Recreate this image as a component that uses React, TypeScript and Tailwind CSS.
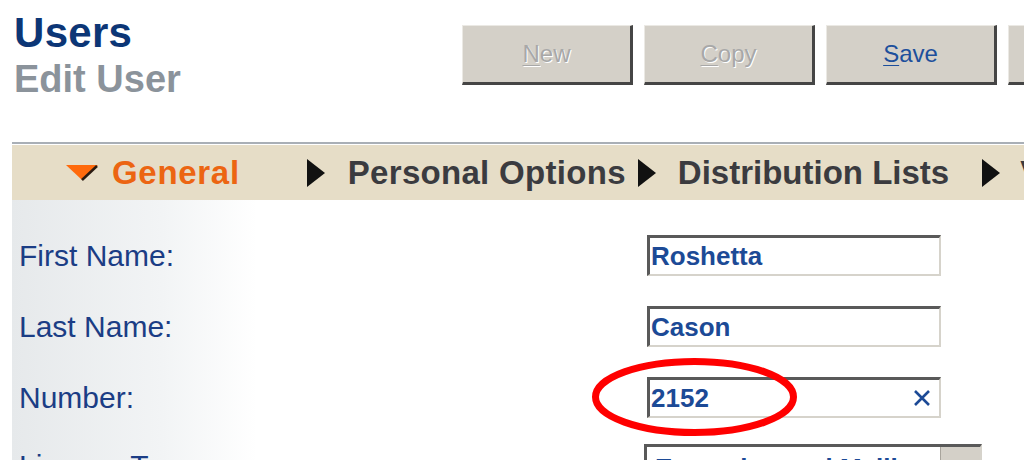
import React from 'react'

const font = { fontFamily: '"Liberation Sans", Arial, sans-serif' }

function ToolButton({ label, disabled }: { label?: string; disabled?: boolean }) {
  return (
    <button
      className={
        'w-[171px] h-[60px] shrink-0 bg-[#d4d0c8] border-t border-l border-t-[#ebe9e4] border-l-[#ebe9e4] border-r-[3px] border-b-[3px] border-r-[#454545] border-b-[#454545] text-[24px] flex items-center justify-center ' +
        (disabled ? 'text-[#a8a8a8] [text-shadow:1px_1px_0_#ffffff]' : 'text-[#1d4f9c]')
      }
    >
      {label && (
        <span>
          <span className="underline underline-offset-[3px] decoration-1">{label[0]}</span>
          {label.slice(1)}
        </span>
      )}
    </button>
  )
}

function RightArrow() {
  return (
    <svg width="18" height="28" viewBox="0 0 18 28" className="shrink-0">
      <polygon points="0,0 18,14 0,28" fill="#111111" />
    </svg>
  )
}

function TextField({ value, clear }: { value: string; clear?: boolean }) {
  return (
    <div className="w-[294px] h-[41px] bg-white border-t-[3px] border-l-[3px] border-t-[#595959] border-l-[#595959] border-r-2 border-b-2 border-r-[#d6d3cb] border-b-[#d6d3cb] flex items-center pl-[1px] pr-[8px]">
      <span className="flex-1 text-[26px] font-bold text-[#1c4a96] leading-none">{value}</span>
      {clear && (
        <svg width="18" height="16" viewBox="0 0 18 16">
          <path d="M2 1 L16 15 M16 1 L2 15" stroke="#1c4a96" strokeWidth="2.6" />
        </svg>
      )}
    </div>
  )
}

export default function App() {
  const rows = [
    { label: 'First Name:', value: 'Roshetta' },
    { label: 'Last Name:', value: 'Cason' },
    { label: 'Number:', value: '2152', clear: true },
  ]

  return (
    <div className="relative w-[1024px] h-[460px] overflow-hidden bg-white" style={font}>
      {/* header */}
      <div className="flex h-[142px] pl-[14px] pt-[12px]">
        <div className="w-[448px] shrink-0">
          <div className="text-[42px] font-bold leading-none text-[#0c3676] tracking-[0.3px]">Users</div>
          <div className="mt-[6px] text-[38px] font-bold leading-none text-[#8b939b]">Edit User</div>
        </div>
        <div className="flex gap-[11px] mt-[13px]">
          <ToolButton label="New" disabled />
          <ToolButton label="Copy" disabled />
          <ToolButton label="Save" />
          <ToolButton />
        </div>
      </div>

      {/* tab strip */}
      <div className="ml-[12px] border-t-2 border-[#a9afb6]">
        <div className="h-[56px] border-t border-white bg-[#e6ddc7] flex items-center text-[33px] font-bold whitespace-nowrap text-[#3b3b3f]">
          <svg width="32" height="16" viewBox="0 0 32 16" className="ml-[54px] shrink-0">
            <polygon points="0,0 32,0 16,15" fill="#ff6a0c" />
            <path d="M31 1 L16 15" stroke="#2a1a10" strokeWidth="2.5" />
          </svg>
          <span className="ml-[14px] text-[#ec6512] tracking-[0.7px]">General</span>
          <span className="ml-[67px]"><RightArrow /></span>
          <span className="ml-[23px] tracking-[0.3px]">Personal Options</span>
          <span className="ml-[12px]"><RightArrow /></span>
          <span className="ml-[22px]">Distribution Lists</span>
          <span className="ml-[33px]"><RightArrow /></span>
          <span className="ml-[20px]">Voicemail</span>
        </div>
      </div>

      {/* form */}
      <div className="ml-[12px] h-[260px] pt-[35px] bg-[linear-gradient(to_right,#e6e9eb_0px,#f2f4f5_150px,#ffffff_245px)]">
        <div className="grid grid-cols-[635px_1fr] gap-y-[30px]">
          {rows.map((r) => (
            <React.Fragment key={r.label}>
              <div className="h-[41px] flex items-center pl-[7px] text-[30px] text-[#1b3d85]">{r.label}</div>
              <div className="h-[41px]">
                <TextField value={r.value} clear={r.clear} />
              </div>
            </React.Fragment>
          ))}
          <div className="h-[41px] flex items-center pl-[7px] text-[30px] text-[#1b3d85] -mt-[3px]">License Type:</div>
          <div className="h-[41px] -mt-[4px] -ml-[3px]">
            <div className="w-[338px] h-[41px] bg-white border-t-[3px] border-l-[3px] border-t-[#595959] border-l-[#595959] border-r-2 border-b-2 border-r-[#d6d3cb] border-b-[#d6d3cb] flex items-center">
              <span className="flex-1 pl-[8px] pt-[6px] text-[26px] font-bold text-[#1c4a96] leading-none whitespace-nowrap overflow-hidden">Extension and Mailbox</span>
              <div className="w-[40px] h-full bg-[#d4d0c8] border-l border-[#a8a49c] flex items-center justify-center">
                <svg width="14" height="8" viewBox="0 0 14 8">
                  <path d="M1 1 L7 7 L13 1" stroke="#404040" strokeWidth="2" fill="none" />
                </svg>
              </div>
            </div>
          </div>
        </div>
      </div>

      {/* red annotation ring */}
      <svg className="absolute left-[588px] top-[354px] pointer-events-none" width="214" height="86" viewBox="0 0 214 86">
        <ellipse cx="106.5" cy="43" rx="99" ry="35.5" fill="none" stroke="#ff0000" strokeWidth="7" />
      </svg>
    </div>
  )
}
